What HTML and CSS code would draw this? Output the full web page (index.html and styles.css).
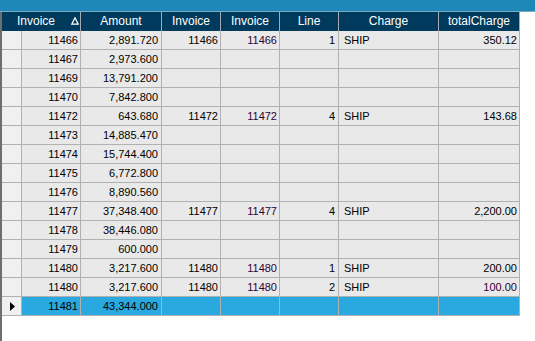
FILE: index.html
```html
<!DOCTYPE html>
<html>
<head>
<meta charset="utf-8">
<link rel="stylesheet" href="styles.css">
</head>
<body>
<div class="window">
  <div class="titlebar"></div>
  <div class="main">
    <div class="edge"></div>
    <div class="grid">
      <div class="row head">
        <div class="h first"><span>Invoice</span><svg class="sort" width="8" height="8" viewBox="0 0 8 8"><path d="M4 0.8 L7.3 7.2 L0.7 7.2 Z" fill="none" stroke="#fff" stroke-width="1.3"/></svg></div>
        <div class="h">Amount</div>
        <div class="h">Invoice</div>
        <div class="h">Invoice</div>
        <div class="h">Line</div>
        <div class="h">Charge</div>
        <div class="h">totalCharge</div>
      </div>
      <div class="row"><div class="c rh"></div><div class="c r">11466</div><div class="c r a">2,891.720</div><div class="c r">11466</div><div class="c r p">11466</div><div class="c r n">1</div><div class="c l">SHIP</div><div class="c r">350.12</div></div>
      <div class="row"><div class="c rh"></div><div class="c r">11467</div><div class="c r a">2,973.600</div><div class="c"></div><div class="c"></div><div class="c"></div><div class="c"></div><div class="c"></div></div>
      <div class="row"><div class="c rh"></div><div class="c r">11469</div><div class="c r a">13,791.200</div><div class="c"></div><div class="c"></div><div class="c"></div><div class="c"></div><div class="c"></div></div>
      <div class="row"><div class="c rh"></div><div class="c r">11470</div><div class="c r a">7,842.800</div><div class="c"></div><div class="c"></div><div class="c"></div><div class="c"></div><div class="c"></div></div>
      <div class="row"><div class="c rh"></div><div class="c r">11472</div><div class="c r a">643.680</div><div class="c r">11472</div><div class="c r p">11472</div><div class="c r n">4</div><div class="c l">SHIP</div><div class="c r">143.68</div></div>
      <div class="row"><div class="c rh"></div><div class="c r">11473</div><div class="c r a">14,885.470</div><div class="c"></div><div class="c"></div><div class="c"></div><div class="c"></div><div class="c"></div></div>
      <div class="row"><div class="c rh"></div><div class="c r">11474</div><div class="c r a">15,744.400</div><div class="c"></div><div class="c"></div><div class="c"></div><div class="c"></div><div class="c"></div></div>
      <div class="row"><div class="c rh"></div><div class="c r">11475</div><div class="c r a">6,772.800</div><div class="c"></div><div class="c"></div><div class="c"></div><div class="c"></div><div class="c"></div></div>
      <div class="row"><div class="c rh"></div><div class="c r">11476</div><div class="c r a">8,890.560</div><div class="c"></div><div class="c"></div><div class="c"></div><div class="c"></div><div class="c"></div></div>
      <div class="row"><div class="c rh"></div><div class="c r">11477</div><div class="c r a">37,348.400</div><div class="c r">11477</div><div class="c r p">11477</div><div class="c r n">4</div><div class="c l">SHIP</div><div class="c r">2,200.00</div></div>
      <div class="row"><div class="c rh"></div><div class="c r">11478</div><div class="c r a">38,446.080</div><div class="c"></div><div class="c"></div><div class="c"></div><div class="c"></div><div class="c"></div></div>
      <div class="row"><div class="c rh"></div><div class="c r">11479</div><div class="c r a">600.000</div><div class="c"></div><div class="c"></div><div class="c"></div><div class="c"></div><div class="c"></div></div>
      <div class="row"><div class="c rh"></div><div class="c r">11480</div><div class="c r a">3,217.600</div><div class="c r">11480</div><div class="c r p">11480</div><div class="c r n">1</div><div class="c l">SHIP</div><div class="c r">200.00</div></div>
      <div class="row"><div class="c rh"></div><div class="c r">11480</div><div class="c r a">3,217.600</div><div class="c r">11480</div><div class="c r p">11480</div><div class="c r n">2</div><div class="c l">SHIP</div><div class="c r p">100.00</div></div>
      <div class="row sel"><div class="c rh"><svg width="5" height="9" viewBox="0 0 5 9"><path d="M0 0 L5 4.5 L0 9 Z" fill="#000"/></svg></div><div class="c r">11481</div><div class="c r a">43,344.000</div><div class="c"></div><div class="c"></div><div class="c"></div><div class="c"></div><div class="c"></div></div>
    </div>
  </div>
</div>
</body>
</html>
```
FILE: styles.css
```css
html, body {
  margin: 0;
  padding: 0;
  background: #ffffff;
}
.window {
  width: 535px;
  height: 341px;
  display: flex;
  flex-direction: column;
  overflow: hidden;
}
.titlebar {
  height: 11px;
  flex: none;
  background: #1e88b8;
  border-bottom: 1px solid #7fa9c2;
}
.main {
  flex: 1;
  display: flex;
  align-items: flex-start;
}
.edge {
  width: 2px;
  align-self: stretch;
  background: #6e6e6e;
}
.grid {
  display: grid;
  grid-template-columns: 20px 59px 81px 59px 59px 59px 100px 81px;
  grid-auto-rows: 19px;
  font-family: "Liberation Sans", Arial, sans-serif;
}
.row {
  display: contents;
}
.h {
  box-sizing: border-box;
  background: #003a5c;
  color: #ffffff;
  font-size: 12px;
  line-height: 19px;
  text-align: center;
  border-right: 1px solid #a3a9ae;
  white-space: nowrap;
}
.h.first {
  grid-column: span 2;
  display: flex;
  align-items: flex-start;
  padding-left: 15px;
  text-align: left;
}
.sort {
  margin-left: 16px;
  margin-top: 5px;
}
.c {
  box-sizing: border-box;
  background: #e9e9e9;
  border-right: 1px solid #b1b1b1;
  border-bottom: 1px solid #b1b1b1;
  font-size: 11px;
  line-height: 17px;
  padding-top: 1px;
  color: #000000;
  white-space: nowrap;
  overflow: hidden;
}
.c.rh {
  background: #f0f0f0;
  display: flex;
  align-items: center;
  padding: 0 0 0 8px;
}
.c.r {
  text-align: right;
  padding-right: 2px;
}
.c.a {
  padding-right: 3px;
}
.c.n {
  padding-right: 3px;
}
.c.l {
  text-align: left;
  padding-left: 5px;
}
.c.p {
  color: #330033;
}
.sel .c {
  background: #29a9e0;
}
.sel .c.rh {
  background: #f0f0f0;
}
```
